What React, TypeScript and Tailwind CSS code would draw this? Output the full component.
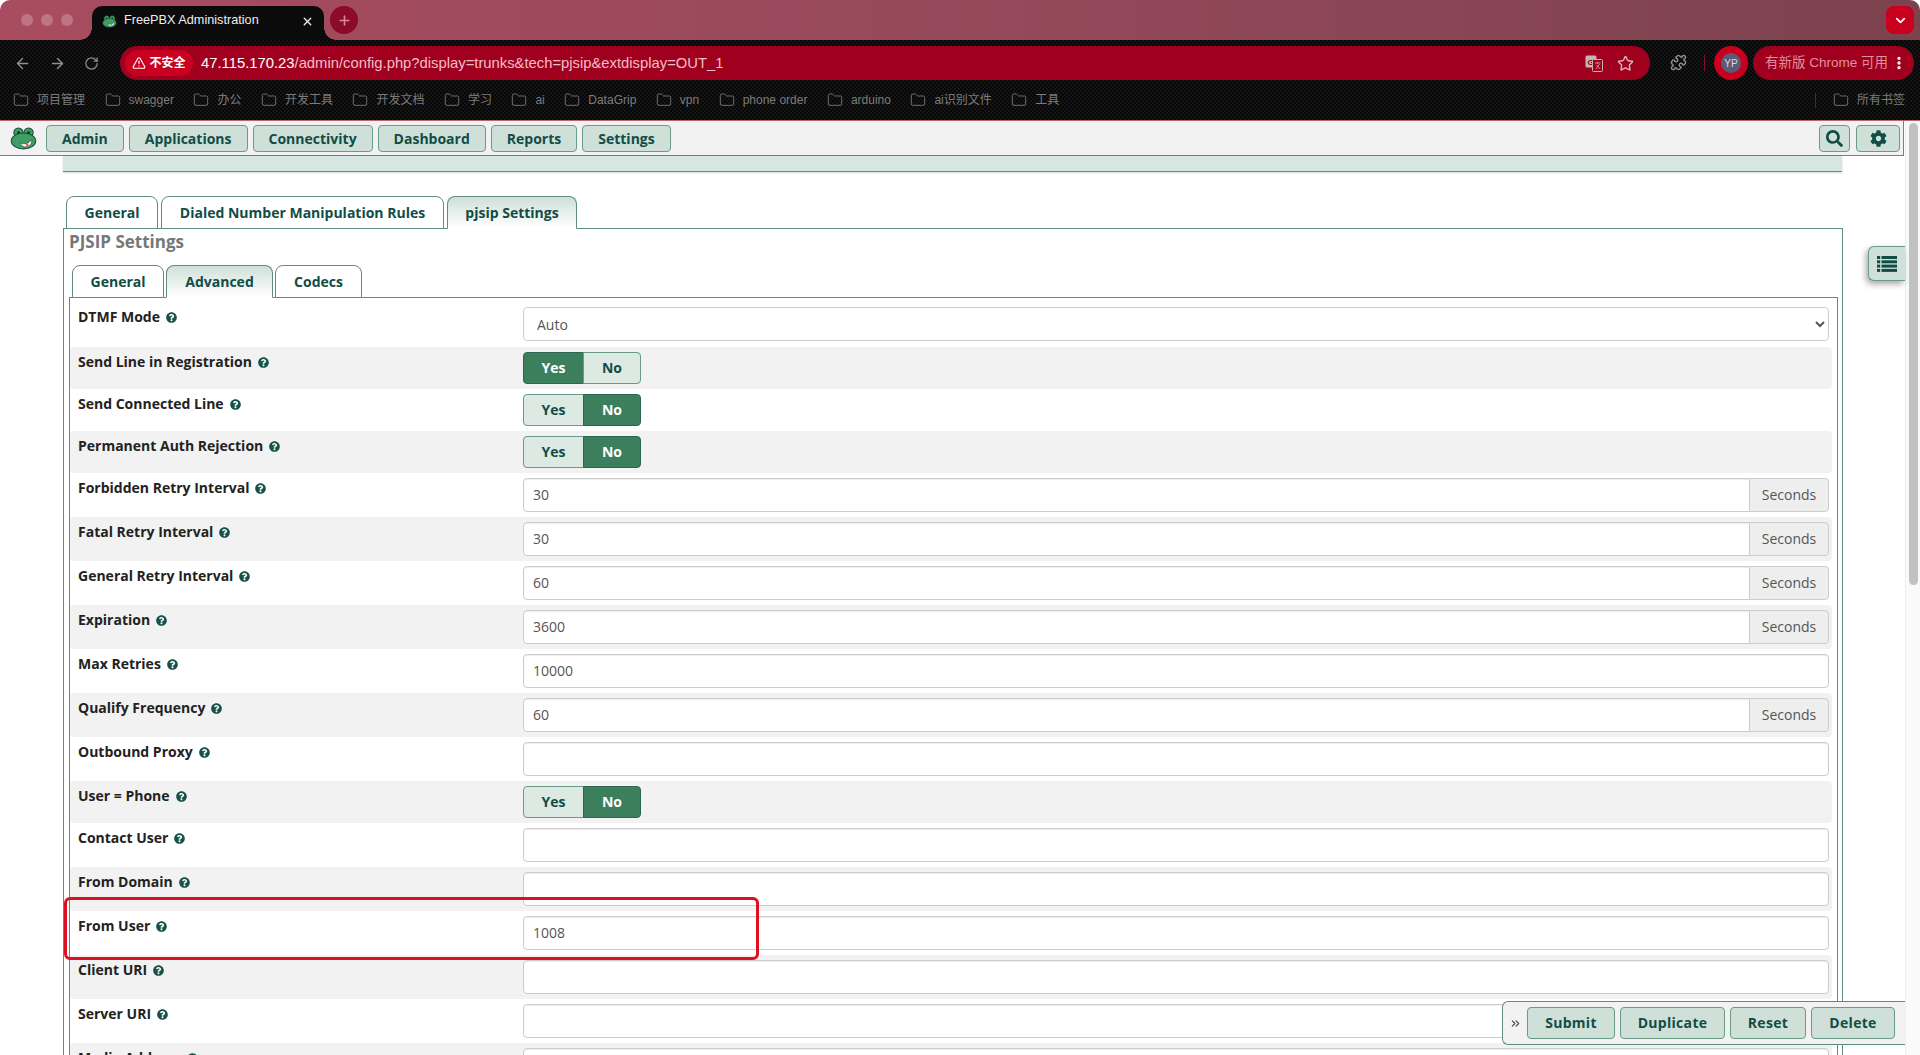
import { ArrowLeft, ArrowRight, RotateCw, Folder, Star, Puzzle, TriangleAlert, EllipsisVertical, ChevronDown, X, Plus, ChevronsRight } from 'lucide-react';
import { FaQuestionCircle, FaSearch, FaCog } from 'react-icons/fa';

type Row = { label: string; kind: 'select' | 'toggle' | 'input' | 'seconds'; value?: string };

const rows: Row[] = [
  { label: 'DTMF Mode', kind: 'select', value: 'Auto' },
  { label: 'Send Line in Registration', kind: 'toggle', value: 'Yes' },
  { label: 'Send Connected Line', kind: 'toggle', value: 'No' },
  { label: 'Permanent Auth Rejection', kind: 'toggle', value: 'No' },
  { label: 'Forbidden Retry Interval', kind: 'seconds', value: '30' },
  { label: 'Fatal Retry Interval', kind: 'seconds', value: '30' },
  { label: 'General Retry Interval', kind: 'seconds', value: '60' },
  { label: 'Expiration', kind: 'seconds', value: '3600' },
  { label: 'Max Retries', kind: 'input', value: '10000' },
  { label: 'Qualify Frequency', kind: 'seconds', value: '60' },
  { label: 'Outbound Proxy', kind: 'input' },
  { label: 'User = Phone', kind: 'toggle', value: 'No' },
  { label: 'Contact User', kind: 'input' },
  { label: 'From Domain', kind: 'input' },
  { label: 'From User', kind: 'input', value: '1008' },
  { label: 'Client URI', kind: 'input' },
  { label: 'Server URI', kind: 'input' },
  { label: 'Media Address', kind: 'input' },
];

const bookmarks = ['项目管理', 'swagger', '办公', '开发工具', '开发文档', '学习', 'ai', 'DataGrip', 'vpn', 'phone order', 'arduino', 'ai识别文件', '工具'];
const navItems = ['Admin', 'Applications', 'Connectivity', 'Dashboard', 'Reports', 'Settings'];

function Frog({ size }: { size: number }) {
  return (
    <svg width={size} height={size} viewBox="0 0 32 28">
      <circle cx="10" cy="7" r="5.5" fill="#3f9e62" stroke="#17493a" strokeWidth="1.2" />
      <circle cx="22" cy="7" r="5.5" fill="#3f9e62" stroke="#17493a" strokeWidth="1.2" />
      <ellipse cx="16" cy="17" rx="14.5" ry="9.5" fill="#3f9e62" stroke="#17493a" strokeWidth="1.2" />
      <circle cx="10" cy="7" r="1.5" fill="#10261f" />
      <circle cx="22" cy="7" r="1.5" fill="#10261f" />
      <path d="M12 19 Q20 23 26 15 Q26 25 17 24 Q13 23 12 19Z" fill="#fff" stroke="#17493a" strokeWidth="0.8" />
      <circle cx="20.5" cy="21.5" r="1.6" fill="#e0564f" />
    </svg>
  );
}

function ListIcon() {
  return (
    <svg width="20" height="16" viewBox="0 0 20 16" fill="#124c47">
      {[0, 4.3, 8.6, 12.9].map(y => (
        <g key={y}>
          <rect x="0" y={y} width="3.2" height="3" />
          <rect x="4.5" y={y} width="15.5" height="3" />
        </g>
      ))}
    </svg>
  );
}

function TranslateIcon() {
  return (
    <svg width="18" height="17" viewBox="0 0 18 17">
      <rect x="0.5" y="0.5" width="11" height="12" rx="1.5" fill="#c4b4b8" />
      <text x="2.5" y="9.5" fontSize="8" fontWeight="700" fill="#700" fontFamily="Liberation Sans">G</text>
      <rect x="7.5" y="4.5" width="10" height="12" rx="1" fill="#a0001e" stroke="#c4b4b8" />
      <path d="M10 8h5.5M12.7 7v1.5M11 14l3.5-5M11.5 10l3.5 4" stroke="#c4b4b8" strokeWidth="0.8" fill="none" />
    </svg>
  );
}

function Toggle({ value }: { value?: string }) {
  const on = 'bg-[#3c7f5d] text-white border-[#2c6650]';
  const off = 'bg-[#dde9e3] text-[#124c47] border-[#6a9a88]';
  return (
    <div className="flex h-8 w-[118px] text-sm font-bold">
      <span className={`flex w-[61px] items-center justify-center rounded-l border ${value === 'Yes' ? on : off}`}>Yes</span>
      <span className={`-ml-px flex w-[58px] items-center justify-center rounded-r border ${value === 'No' ? on : off}`}>No</span>
    </div>
  );
}

function Field({ row }: { row: Row }) {
  if (row.kind === 'toggle') return <Toggle value={row.value} />;
  if (row.kind === 'select') {
    return (
      <select className="h-[34px] w-full rounded border border-[#ccc] bg-white pl-[9px] text-sm text-[#555]">
        <option>{row.value}</option>
      </select>
    );
  }
  const input = (
    <input
      readOnly
      defaultValue={row.value ?? ''}
      className={`h-[34px] min-w-0 flex-1 border border-[#ccc] bg-white px-[9px] pb-[2px] text-sm text-[#555] shadow-[inset_0_1px_1px_rgba(0,0,0,0.075)] ${row.kind === 'seconds' ? 'rounded-l' : 'rounded'}`}
    />
  );
  return (
    <div className="flex w-full">
      {input}
      {row.kind === 'seconds' && (
        <span className="-ml-px flex h-[34px] w-[80px] items-center justify-center rounded-r border border-[#ccc] bg-[#eee] text-sm text-[#555]">
          Seconds
        </span>
      )}
    </div>
  );
}

function TabButton({ label, active, width }: { label: string; active?: boolean; width: string }) {
  return (
    <div
      className={`-mb-px flex h-[33px] items-center justify-center rounded-t-lg border border-[#5f8c7c] text-sm font-bold text-[#124c47] ${width} ${active ? 'border-b-white bg-gradient-to-b from-[#cfe0d8] to-white' : 'bg-white'}`}
    >
      {label}
    </div>
  );
}

export default function App() {
  return (
    <div className="relative flex h-[1055px] w-[1920px] flex-col overflow-hidden bg-white font-['Open_Sans','Noto_Sans_CJK_SC',sans-serif]">

      {/* browser chrome */}
      <div className="shrink-0 font-['Liberation_Sans','Noto_Sans_CJK_SC',sans-serif]">
        <div className="flex h-10 items-start rounded-t-[10px] bg-gradient-to-r from-[#a94c60] via-[#96495a] to-[#7c424e] pt-[6px]">
          <div className="ml-[21px] mt-[8px] flex gap-2">
            <span className="h-3 w-3 rounded-full bg-[#bd7583]" />
            <span className="h-3 w-3 rounded-full bg-[#bd7583]" />
            <span className="h-3 w-3 rounded-full bg-[#bd7583]" />
          </div>
          <div className="relative ml-[19px] flex h-[34px] w-[232px] items-center rounded-t-[10px] bg-[#0b0b0b] pb-1 pl-[10px] pr-[10px] text-[12.7px] text-[#eee]">
            <span className="absolute -left-[12px] bottom-0 h-3 w-3 bg-[radial-gradient(circle_at_0_0,transparent_11.5px,#0b0b0b_12px)]" />
            <span className="absolute -right-[12px] bottom-0 h-3 w-3 bg-[radial-gradient(circle_at_100%_0,transparent_11.5px,#0b0b0b_12px)]" />
            <Frog size={15} />
            <span className="ml-[7px] flex-1">FreePBX Administration</span>
            <X size={13} strokeWidth={2.5} />
          </div>
          <div className="ml-[6px] flex h-7 w-7 items-center justify-center rounded-full bg-[#8c0a2a] text-[#d9899a]">
            <Plus size={15} strokeWidth={2.5} />
          </div>
          <div className="ml-auto mr-[6px] flex h-7 w-7 items-center justify-center rounded-lg bg-[#c8001e] text-white">
            <ChevronDown size={15} strokeWidth={3} />
          </div>
        </div>

        <div className="bg-[#0b0b0b] bg-[repeating-conic-gradient(#151515_0%_25%,#060606_0%_50%)] bg-[length:4px_4px]">
          <div className="flex h-[46px] items-start pt-[6px]">
            <div className="flex h-[34px] w-[120px] items-center gap-[18px] pl-[14px] text-[#8f8f8f]">
              <ArrowLeft size={17} />
              <ArrowRight size={17} />
              <RotateCw size={15} />
            </div>
            <div className="flex h-[34px] w-[1530px] items-center rounded-full bg-[#a0001e] pl-[5px] pr-[16px]">
              <div className="flex h-[26px] w-[68px] items-center justify-center gap-[3px] rounded-full bg-[#c90020] text-xs font-bold text-white">
                <TriangleAlert size={14} />
                不安全
              </div>
              <span className="ml-2 text-[14.8px] text-[#f5bcc6]">
                <span className="text-white">47.115.170.23</span>/admin/config.php?display=trunks&amp;tech=pjsip&amp;extdisplay=OUT_1
              </span>
              <div className="ml-auto flex items-center gap-[14px] text-[#d9b3bb]">
                <TranslateIcon />
                <Star size={17} />
              </div>
            </div>
            <div className="ml-[20px] text-[#8f8f8f]">
              <Puzzle size={17} className="mt-2" />
            </div>
            <span className="ml-[17px] mt-[9px] h-4 w-px bg-[#8c0a2a]" />
            <div className="ml-[9px] flex h-[34px] w-[34px] items-center justify-center rounded-full bg-[#c8001e]">
              <span className="flex h-5 w-5 items-center justify-center rounded-full bg-[#5c5a78] text-[10px] text-[#ddd]">YP</span>
            </div>
            <div className="ml-[5px] flex h-[34px] w-[161px] items-center rounded-full bg-[#a0001e] pl-[12px] text-[13.5px] text-[#e0909f]">
              <span className="flex-1">有新版 Chrome 可用</span>
              <EllipsisVertical size={16} strokeWidth={3} className="mr-[7px] text-white" />
            </div>
          </div>
          <div className="flex h-[34px] items-start pl-[13px] text-xs text-[#7c7c7c]">
            <div className="flex h-[28px] items-center gap-[19.5px]">
              {bookmarks.map(b => (
                <span key={b} className="flex items-center gap-2">
                  <Folder size={16} strokeWidth={1.3} />
                  {b}
                </span>
              ))}
            </div>
            <div className="ml-auto mr-[15px] flex h-[28px] items-center">
              <span className="mr-[17px] h-[15px] w-px bg-[#8c0a2a]" />
              <Folder size={16} strokeWidth={1.3} />
              <span className="ml-2">所有书签</span>
            </div>
          </div>
        </div>
      </div>

      {/* page */}
      <div className="flex min-h-0 flex-1 border-t border-[#b9676f]">
        <div className="w-[1905px]">
          <div className="mr-px flex h-[35px] items-start border-b border-r border-[#5f8c7c] bg-[#f2f2f2] pr-[3px] pt-1 text-sm font-bold text-[#124c47]">
            <div className="ml-[10px] mr-[9px] flex h-[27px] items-center">
              <Frog size={27} />
            </div>
            <div className="flex gap-[5px]">
              {navItems.map(item => (
                <span key={item} className="flex h-[27px] items-center rounded border border-[#6a9a88] bg-[#cfe0d8] px-[15px]">{item}</span>
              ))}
            </div>
            <div className="ml-auto flex gap-[6px] text-[17px]">
              <span className="flex h-[27px] w-[31px] items-center justify-center rounded border border-[#6a9a88] bg-[#cfe0d8]"><FaSearch /></span>
              <span className="flex h-[27px] w-[44px] items-center justify-center rounded border border-[#6a9a88] bg-[#cfe0d8]"><FaCog /></span>
            </div>
          </div>

          <div className="ml-[63px] h-4 w-[1779px] border-b border-[#5f8c7c] bg-[#d5e6e3] shadow-[0_1px_2px_rgba(0,0,0,0.15)]" />

          <div className="ml-[66px] mt-6 flex gap-[3px]">
            <TabButton label="General" width="w-[92px]" />
            <TabButton label="Dialed Number Manipulation Rules" width="w-[283px]" />
            <TabButton label="pjsip Settings" width="w-[130px]" active />
          </div>

          <div className="ml-[63px] w-[1780px] border border-[#5f8c7c] pl-[5px] pr-1 pb-10">
            <h2 className="text-[17px] leading-[26px] font-bold text-[#777]">PJSIP Settings</h2>
            <div className="ml-[3px] mt-[10px] flex gap-[2px]">
              <TabButton label="General" width="w-[92px]" />
              <TabButton label="Advanced" width="w-[107px]" active />
              <TabButton label="Codecs" width="w-[87px]" />
            </div>
            <div className="border border-[#5f8c7c] pr-[5px] pt-1">
              {rows.map((row, i) => (
                <div key={row.label} className={`flex rounded-sm pl-2 pr-[3px] pt-[5px] ${i === 0 ? 'pb-[6px]' : 'pb-[5px]'} ${i % 2 === 1 ? 'bg-[#f2f2f2]' : ''}`}>
                  <div className="flex h-5 w-[445px] shrink-0 items-center gap-[6px] text-sm font-bold text-[#222]">
                    {row.label}
                    <FaQuestionCircle size={11} className="text-[#14524a]" />
                  </div>
                  <div className="min-w-0 flex-1">
                    <Field row={row} />
                  </div>
                </div>
              ))}
            </div>
          </div>
        </div>

        {/* scrollbar */}
        <div className="flex-1 border-l border-[#eee] bg-[#fafafa] pl-[3px] pt-[2px]">
          <div className="h-[462px] w-[9px] rounded-full bg-[#c1c1c1]" />
        </div>
      </div>

      {/* floating bits */}
      <div className="absolute left-[1868px] top-[246px] flex h-[35px] w-[37px] items-center justify-center rounded-l-md border border-r-0 border-[#6a9a88] bg-[#cfe0d8] shadow-[-2px_3px_6px_rgba(0,0,0,0.35)]">
        <ListIcon />
      </div>

      <div className="absolute left-[64px] top-[897px] h-[63px] w-[695px] rounded-md border-[3px] border-[#dc1020]" />

      <div className="absolute left-[1502px] top-[1001px] flex h-[44px] w-[403px] items-start rounded-l-md border border-r-0 border-[#5f8c7c] bg-[#f2f2f2] pl-[6px] pt-[5px] text-sm font-bold tracking-[0.3px] text-[#124c47]">
        <div className="mr-[5px] flex h-8 items-center">
          <ChevronsRight size={13} className="text-[#444]" />
        </div>
        <div className="flex gap-[5px]">
          <span className="flex h-8 w-[88px] items-center justify-center rounded border border-[#6a9a88] bg-[#cfe0d8]">Submit</span>
          <span className="flex h-8 w-[105px] items-center justify-center rounded border border-[#6a9a88] bg-[#cfe0d8]">Duplicate</span>
          <span className="flex h-8 w-[76px] items-center justify-center rounded border border-[#6a9a88] bg-[#cfe0d8]">Reset</span>
          <span className="flex h-8 w-[84px] items-center justify-center rounded border border-[#6a9a88] bg-[#cfe0d8]">Delete</span>
        </div>
      </div>
    </div>
  );
}
